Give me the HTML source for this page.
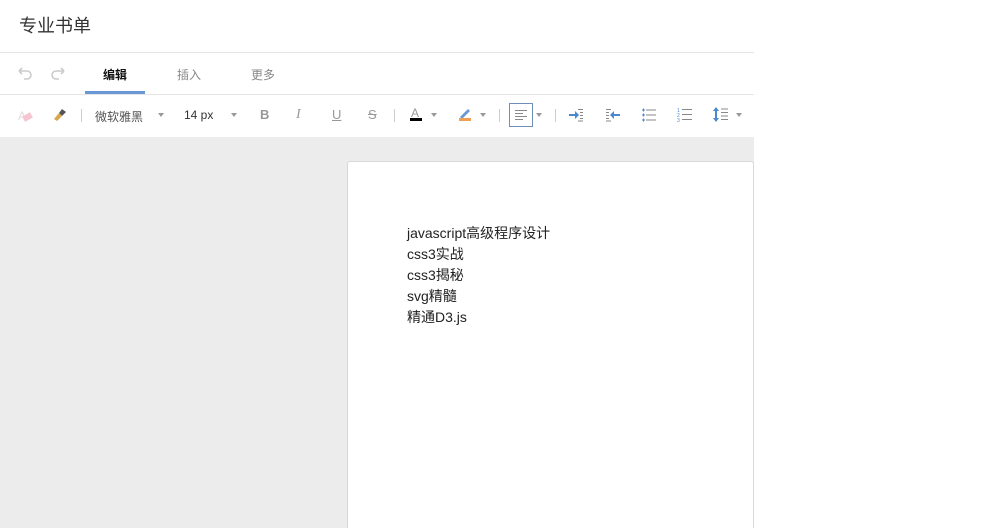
<!DOCTYPE html>
<html style="width:1000px;height:528px;overflow:hidden"><head><meta charset="utf-8"><style>
*{margin:0;padding:0;box-sizing:border-box}
body{width:1000px;height:528px;background:#fff;font-family:"Liberation Sans","Noto Sans CJK SC",sans-serif;position:relative;overflow:hidden}
.a{position:absolute}
.title{left:19px;top:12px;font-size:18px;color:#333}
.hr{left:0;width:754px;height:1px;background:#e5e5e5}
.tab{top:66px;font-size:12px;color:#888}
.t{font-size:12px;color:#555}
.arr{width:0;height:0;border-left:3px solid transparent;border-right:3px solid transparent;border-top:4px solid #999}
.sep{width:1px;height:13px;background:#ccc;top:109px}
.gray{left:0;top:137px;width:754px;height:391px;background:#ececec}
.page{left:347px;top:161px;width:407px;height:367px;background:#fff;border:1px solid #d8d8d8;border-bottom:none;border-radius:3px 3px 0 0}
.txt{left:407px;top:223px;font-size:14px;line-height:21px;color:#222}
</style></head><body>
<div class="a title">专业书单</div>
<div class="a hr" style="top:52px"></div>
<svg class="a" style="left:15px;top:66px" width="55" height="16" fill="none" stroke="#ccc" stroke-width="1.6"><path d="M4 5h8a4 4 0 0 1 0 8H9M4 5l3-3M4 5l3 3"/><path d="M49 5h-8a4 4 0 0 0 0 8h3M49 5l-3-3M49 5l-3 3"/></svg>
<div class="a tab" style="left:103px;color:#111;font-weight:bold">编辑</div>
<div class="a tab" style="left:177px">插入</div>
<div class="a tab" style="left:251px">更多</div>
<div class="a" style="left:85px;top:91px;width:60px;height:3px;background:#6a98d6"></div>
<div class="a hr" style="top:94px"></div>
<div class="a" style="left:18px;top:109px;font-size:12px;color:#ddd">A</div>
<div class="a" style="left:23px;top:114px;width:9px;height:6px;background:#f5c6d2;transform:rotate(-30deg)"></div>
<svg class="a" style="left:52px;top:107px" width="16" height="16"><path d="M10 2l4 3-4 4-3-3z" fill="#555"/><path d="M7 6l3 3-5 5-3-2z" fill="#d8a64e"/></svg>
<div class="a sep" style="left:81px"></div>
<div class="a t" style="left:95px;top:108px">微软雅黑</div>
<div class="a arr" style="left:158px;top:113px"></div>
<div class="a t" style="left:184px;top:108px;color:#333">14 px</div>
<div class="a arr" style="left:231px;top:113px"></div>
<div class="a" style="left:260px;top:107px;font-size:13px;font-weight:bold;color:#999">B</div>
<div class="a" style="left:296px;top:107px;font-size:14px;font-style:italic;font-family:'Liberation Serif',serif;color:#999">I</div>
<div class="a" style="left:332px;top:107px;font-size:13px;text-decoration:underline;color:#999">U</div>
<div class="a" style="left:368px;top:107px;font-size:13px;text-decoration:line-through;color:#999">S</div>
<div class="a sep" style="left:394px"></div>
<div class="a" style="left:411px;top:106px;font-size:12px;color:#999">A</div>
<div class="a" style="left:410px;top:118px;width:12px;height:3px;background:#000"></div>
<div class="a arr" style="left:431px;top:113px"></div>
<svg class="a" style="left:458px;top:107px" width="14" height="11"><path d="M2 10l8-8 2 2-8 8z" fill="#6a98d6"/></svg>
<div class="a" style="left:459px;top:118px;width:12px;height:3px;background:#f0a055"></div>
<div class="a arr" style="left:480px;top:113px"></div>
<div class="a sep" style="left:499px"></div>
<div class="a" style="left:509px;top:103px;width:24px;height:24px;border:1px solid #6f8fb8"></div>
<svg class="a" style="left:514px;top:109px" width="14" height="12" stroke="#888"><path d="M1 1.5h12M1 4.5h8M1 7.5h12M1 10.5h8"/></svg>
<div class="a arr" style="left:536px;top:113px"></div>
<div class="a sep" style="left:555px"></div>
<svg class="a" style="left:568px;top:108px" width="16" height="14"><path d="M1 6h6V3l4 4-4 4V8H1z" fill="#4a88d0"/><path d="M10 1.5h5M12 4.5h3M12 7.5h3M12 10.5h3M10 13h5" stroke="#888"/></svg>
<svg class="a" style="left:605px;top:108px" width="16" height="14"><path d="M15 6H9V3L5 7l4 4V8h6z" fill="#4a88d0"/><path d="M1 1.5h5M1 4.5h3M1 7.5h3M1 10.5h3M1 13h5" stroke="#888"/></svg>
<svg class="a" style="left:642px;top:108px" width="14" height="14"><path d="M4 2h10M4 7h10M4 12h10" stroke="#888"/><path d="M0 2h3M1.5 .5v3M0 7h3M1.5 5.5v3M0 12h3M1.5 10.5v3" stroke="#4a88d0"/></svg>
<svg class="a" style="left:677px;top:107px" width="15" height="15"><text x="0" y="5" font-size="5" fill="#4a88d0">1</text><text x="0" y="10" font-size="5" fill="#4a88d0">2</text><text x="0" y="15" font-size="5" fill="#4a88d0">3</text><path d="M5 2.5h10M5 7.5h10M5 12.5h10" stroke="#888"/></svg>
<svg class="a" style="left:712px;top:107px" width="16" height="15"><path d="M4 0l3 4H5v7h2l-3 4-3-4h2V4H1z" fill="#4a88d0"/><path d="M9 2h7M9 5.5h7M9 9h7M9 12.5h7" stroke="#888"/></svg>
<div class="a arr" style="left:736px;top:113px"></div>
<div class="a gray"></div>
<div class="a page"></div>
<div class="a txt">javascript高级程序设计<br>css3实战<br>css3揭秘<br>svg精髓<br>精通D3.js</div>
</body></html>
